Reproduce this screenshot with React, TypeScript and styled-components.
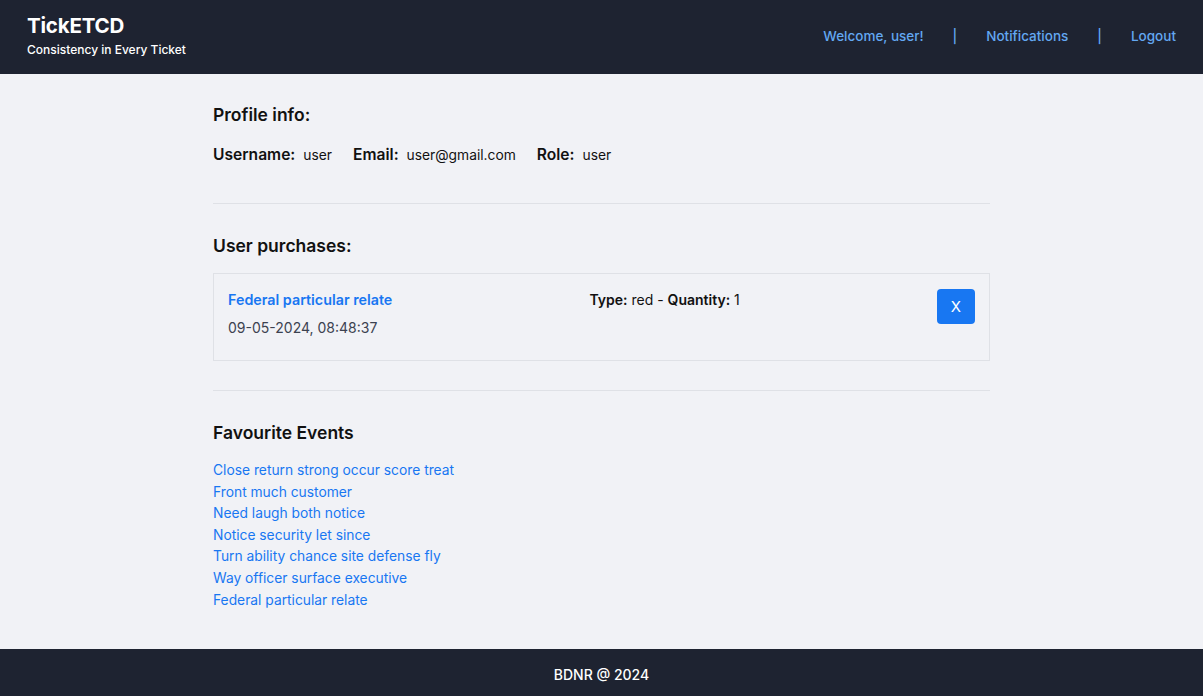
import React from "react";
import styled, { createGlobalStyle } from "styled-components";

const GlobalStyle = createGlobalStyle`
  html, body { margin: 0; padding: 0; }
  body {
    font-family: Inter, "Noto Sans", "Liberation Sans", sans-serif;
    background: #f1f2f6;
    color: #111;
  }
  * { box-sizing: border-box; }
`;

const Page = styled.div`
  display: flex;
  flex-direction: column;
  min-height: 100vh;
`;

const Header = styled.header`
  background: #1e2331;
  height: 74px;
  display: flex;
  align-items: center;
  justify-content: space-between;
  padding: 0 27px 2px;
`;

const Brand = styled.div`
  display: flex;
  flex-direction: column;
  color: #fff;
`;

const BrandTitle = styled.div`
  font-size: 20.5px;
  font-weight: 700;
  line-height: 24px;
  letter-spacing: -0.2px;
`;

const BrandTagline = styled.div`
  font-size: 12px;
  font-weight: 500;
  line-height: 16px;
  margin-top: 4px;
`;

const Nav = styled.nav`
  display: flex;
  align-items: center;
  gap: 29px;
  font-size: 13.5px;
  color: #63a8f2;
  font-weight: 500;
`;

const NavLink = styled.a`
  color: inherit;
  text-decoration: none;
  cursor: pointer;
`;

const Main = styled.main`
  flex: 1;
  width: 777px;
  margin: 0 auto;
  padding: 29px 0 30px;
`;

const Section = styled.section<{ $pad?: number }>`
  padding-bottom: ${(p) => p.$pad ?? 28}px;
`;

const Divider = styled.hr`
  border: none;
  border-top: 1px solid #dfe1e6;
  margin: 0 0 30px;
`;

const Heading = styled.h2`
  font-size: 17.5px;
  font-weight: 600;
  margin: 0 0 15px;
  line-height: 24px;
`;

const InfoRow = styled.div`
  display: flex;
  align-items: baseline;
  gap: 21px;
  padding-top: 3px;
`;

const InfoItem = styled.div`
  display: flex;
  align-items: baseline;
  gap: 8px;
`;

const InfoLabel = styled.span`
  font-size: 15.6px;
  font-weight: 600;
`;

const InfoValue = styled.span`
  font-size: 13.8px;
`;

const Card = styled.div`
  border: 1px solid #dfe1e6;
  padding: 15px 14px 23px;
  display: flex;
  justify-content: space-between;
  align-items: flex-start;
`;

const CardLeft = styled.div`
  display: flex;
  flex-direction: column;
  gap: 9px;
  padding-top: 1px;
`;

const PurchaseLink = styled.a`
  color: #1877f2;
  font-size: 14.3px;
  font-weight: 600;
  text-decoration: none;
  line-height: 19px;
`;

const DateText = styled.span`
  font-size: 14px;
  color: #3c4250;
  line-height: 19px;
`;

const Meta = styled.div`
  font-size: 14px;
  line-height: 19px;
  padding-top: 1px;
  b { font-weight: 600; }
`;

const DeleteButton = styled.button`
  background: #1877f2;
  color: #fff;
  border: none;
  border-radius: 4px;
  width: 38px;
  height: 35px;
  font-size: 15px;
  font-family: inherit;
  cursor: pointer;
`;

const EventList = styled.ul`
  list-style: none;
  margin: 0;
  padding: 0;
`;

const EventItem = styled.li`
  font-size: 13.8px;
  line-height: 21.6px;
  a {
    color: #1877f2;
    text-decoration: none;
  }
`;

const Footer = styled.footer`
  background: #1e2331;
  height: 47px;
  padding-top: 4px;
  display: flex;
  align-items: center;
  justify-content: center;
  color: #fff;
  font-size: 14px;
  font-weight: 500;
`;

const events = [
  "Close return strong occur score treat",
  "Front much customer",
  "Need laugh both notice",
  "Notice security let since",
  "Turn ability chance site defense fly",
  "Way officer surface executive",
  "Federal particular relate",
];

export default function App() {
  return (
    <>
      <GlobalStyle />
      <Page>
        <Header>
          <Brand>
            <BrandTitle>TickETCD</BrandTitle>
            <BrandTagline>Consistency in Every Ticket</BrandTagline>
          </Brand>
          <Nav>
            <NavLink>Welcome, user!</NavLink>
            <span>|</span>
            <NavLink>Notifications</NavLink>
            <span>|</span>
            <NavLink>Logout</NavLink>
          </Nav>
        </Header>
        <Main>
          <Section $pad={39}>
            <Heading>Profile info:</Heading>
            <InfoRow>
              <InfoItem>
                <InfoLabel>Username:</InfoLabel>
                <InfoValue>user</InfoValue>
              </InfoItem>
              <InfoItem>
                <InfoLabel>Email:</InfoLabel>
                <InfoValue>user@gmail.com</InfoValue>
              </InfoItem>
              <InfoItem>
                <InfoLabel>Role:</InfoLabel>
                <InfoValue>user</InfoValue>
              </InfoItem>
            </InfoRow>
          </Section>
          <Divider />
          <Section $pad={29}>
            <Heading>User purchases:</Heading>
            <Card>
              <CardLeft>
                <PurchaseLink>Federal particular relate</PurchaseLink>
                <DateText>09-05-2024, 08:48:37</DateText>
              </CardLeft>
              <Meta>
                <b>Type:</b> red - <b>Quantity:</b> 1
              </Meta>
              <DeleteButton>X</DeleteButton>
            </Card>
          </Section>
          <Divider />
          <Section $pad={0}>
            <Heading>Favourite Events</Heading>
            <EventList>
              {events.map((e) => (
                <EventItem key={e}>
                  <a>{e}</a>
                </EventItem>
              ))}
            </EventList>
          </Section>
        </Main>
        <Footer>BDNR @ 2024</Footer>
      </Page>
    </>
  );
}
